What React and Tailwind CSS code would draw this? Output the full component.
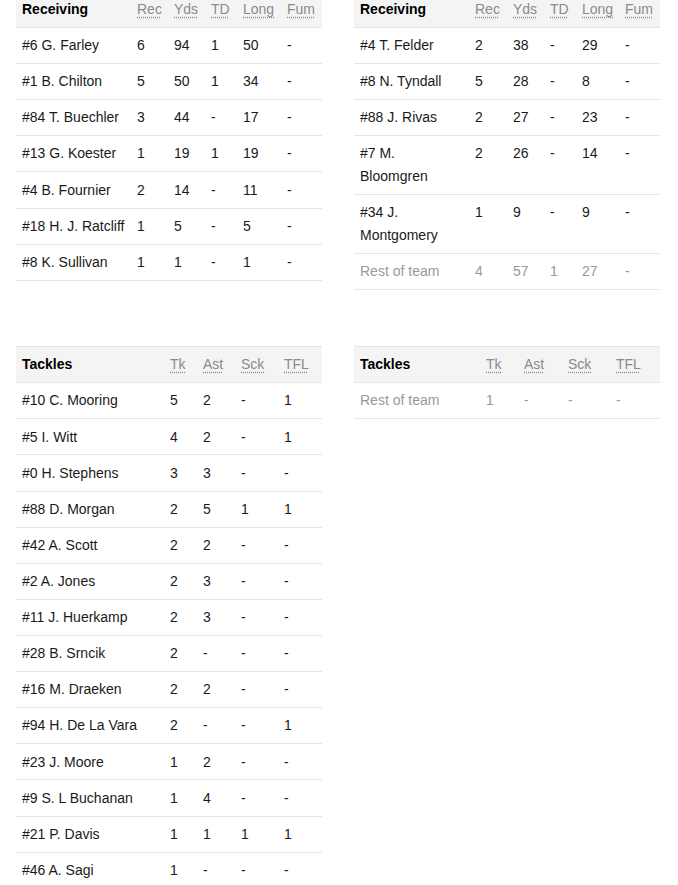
import React from "react";

const recLeft = [
  ["#6 G. Farley", "6", "94", "1", "50", "-"],
  ["#1 B. Chilton", "5", "50", "1", "34", "-"],
  ["#84 T. Buechler", "3", "44", "-", "17", "-"],
  ["#13 G. Koester", "1", "19", "1", "19", "-"],
  ["#4 B. Fournier", "2", "14", "-", "11", "-"],
  ["#18 H. J. Ratcliff", "1", "5", "-", "5", "-"],
  ["#8 K. Sullivan", "1", "1", "-", "1", "-"],
];
const recRight = [
  ["#4 T. Felder", "2", "38", "-", "29", "-"],
  ["#8 N. Tyndall", "5", "28", "-", "8", "-"],
  ["#88 J. Rivas", "2", "27", "-", "23", "-"],
  ["#7 M. Bloomgren", "2", "26", "-", "14", "-"],
  ["#34 J. Montgomery", "1", "9", "-", "9", "-"],
  ["Rest of team", "4", "57", "1", "27", "-", true],
];
const tkLeft = [
  ["#10 C. Mooring", "5", "2", "-", "1"],
  ["#5 I. Witt", "4", "2", "-", "1"],
  ["#0 H. Stephens", "3", "3", "-", "-"],
  ["#88 D. Morgan", "2", "5", "1", "1"],
  ["#42 A. Scott", "2", "2", "-", "-"],
  ["#2 A. Jones", "2", "3", "-", "-"],
  ["#11 J. Huerkamp", "2", "3", "-", "-"],
  ["#28 B. Srncik", "2", "-", "-", "-"],
  ["#16 M. Draeken", "2", "2", "-", "-"],
  ["#94 H. De La Vara", "2", "-", "-", "1"],
  ["#23 J. Moore", "1", "2", "-", "-"],
  ["#9 S. L Buchanan", "1", "4", "-", "-"],
  ["#21 P. Davis", "1", "1", "1", "1"],
  ["#46 A. Sagi", "1", "-", "-", "-"],
];
const tkRight = [["Rest of team", "1", "-", "-", "-", true]];

function StatTable({ title, cols, widths, rows }) {
  return (
    <table className="table-fixed border-collapse w-[306px] text-[14px]">
      <colgroup>
        {widths.map((w, i) => (
          <col key={i} style={{ width: w }} />
        ))}
      </colgroup>
      <thead>
        <tr className="bg-[#f4f4f4] border-y border-[#e6e6e6]">
          <th className="h-[36px] pl-[6px] text-left font-bold text-black">{title}</th>
          {cols.map((c) => (
            <th key={c} className="h-[36px] pl-[6px] text-left font-normal text-[#8a8a8a]">
              <abbr className="underline decoration-dotted underline-offset-[3px]">{c}</abbr>
            </th>
          ))}
        </tr>
      </thead>
      <tbody>
        {rows.map((r, i) => {
          const muted = r[cols.length + 1] === true;
          const cells = r.slice(0, cols.length + 1);
          return (
            <tr key={i} className="border-b border-[#e6e6e6]">
              {cells.map((c, j) => (
                <td
                  key={j}
                  className={
                    "pl-[6px] pr-[4px] py-[6.17px] leading-[22.8px] align-top " +
                    (muted ? "text-[#999999]" : "text-[#1a1a1a]")
                  }
                >
                  {c}
                </td>
              ))}
            </tr>
          );
        })}
      </tbody>
    </table>
  );
}

export default function App() {
  const recCols = ["Rec", "Yds", "TD", "Long", "Fum"];
  const tkCols = ["Tk", "Ast", "Sck", "TFL"];
  return (
    <div className="bg-white w-[678px] h-[885px] overflow-hidden font-['Liberation_Sans',Arial,sans-serif]">
      <div className="-mt-[9px] pl-[16px] grid grid-cols-[306px_306px] gap-x-[32px] gap-y-[56px] items-start">
        <StatTable title="Receiving" cols={recCols} widths={[115, 37, 37, 32, 44, 41]} rows={recLeft} />
        <StatTable title="Receiving" cols={recCols} widths={[115, 38, 37, 32, 43, 41]} rows={recRight} />
        <StatTable title="Tackles" cols={tkCols} widths={[148, 33, 38, 43, 44]} rows={tkLeft} />
        <StatTable title="Tackles" cols={tkCols} widths={[126, 38, 44, 48, 50]} rows={tkRight} />
      </div>
    </div>
  );
}
